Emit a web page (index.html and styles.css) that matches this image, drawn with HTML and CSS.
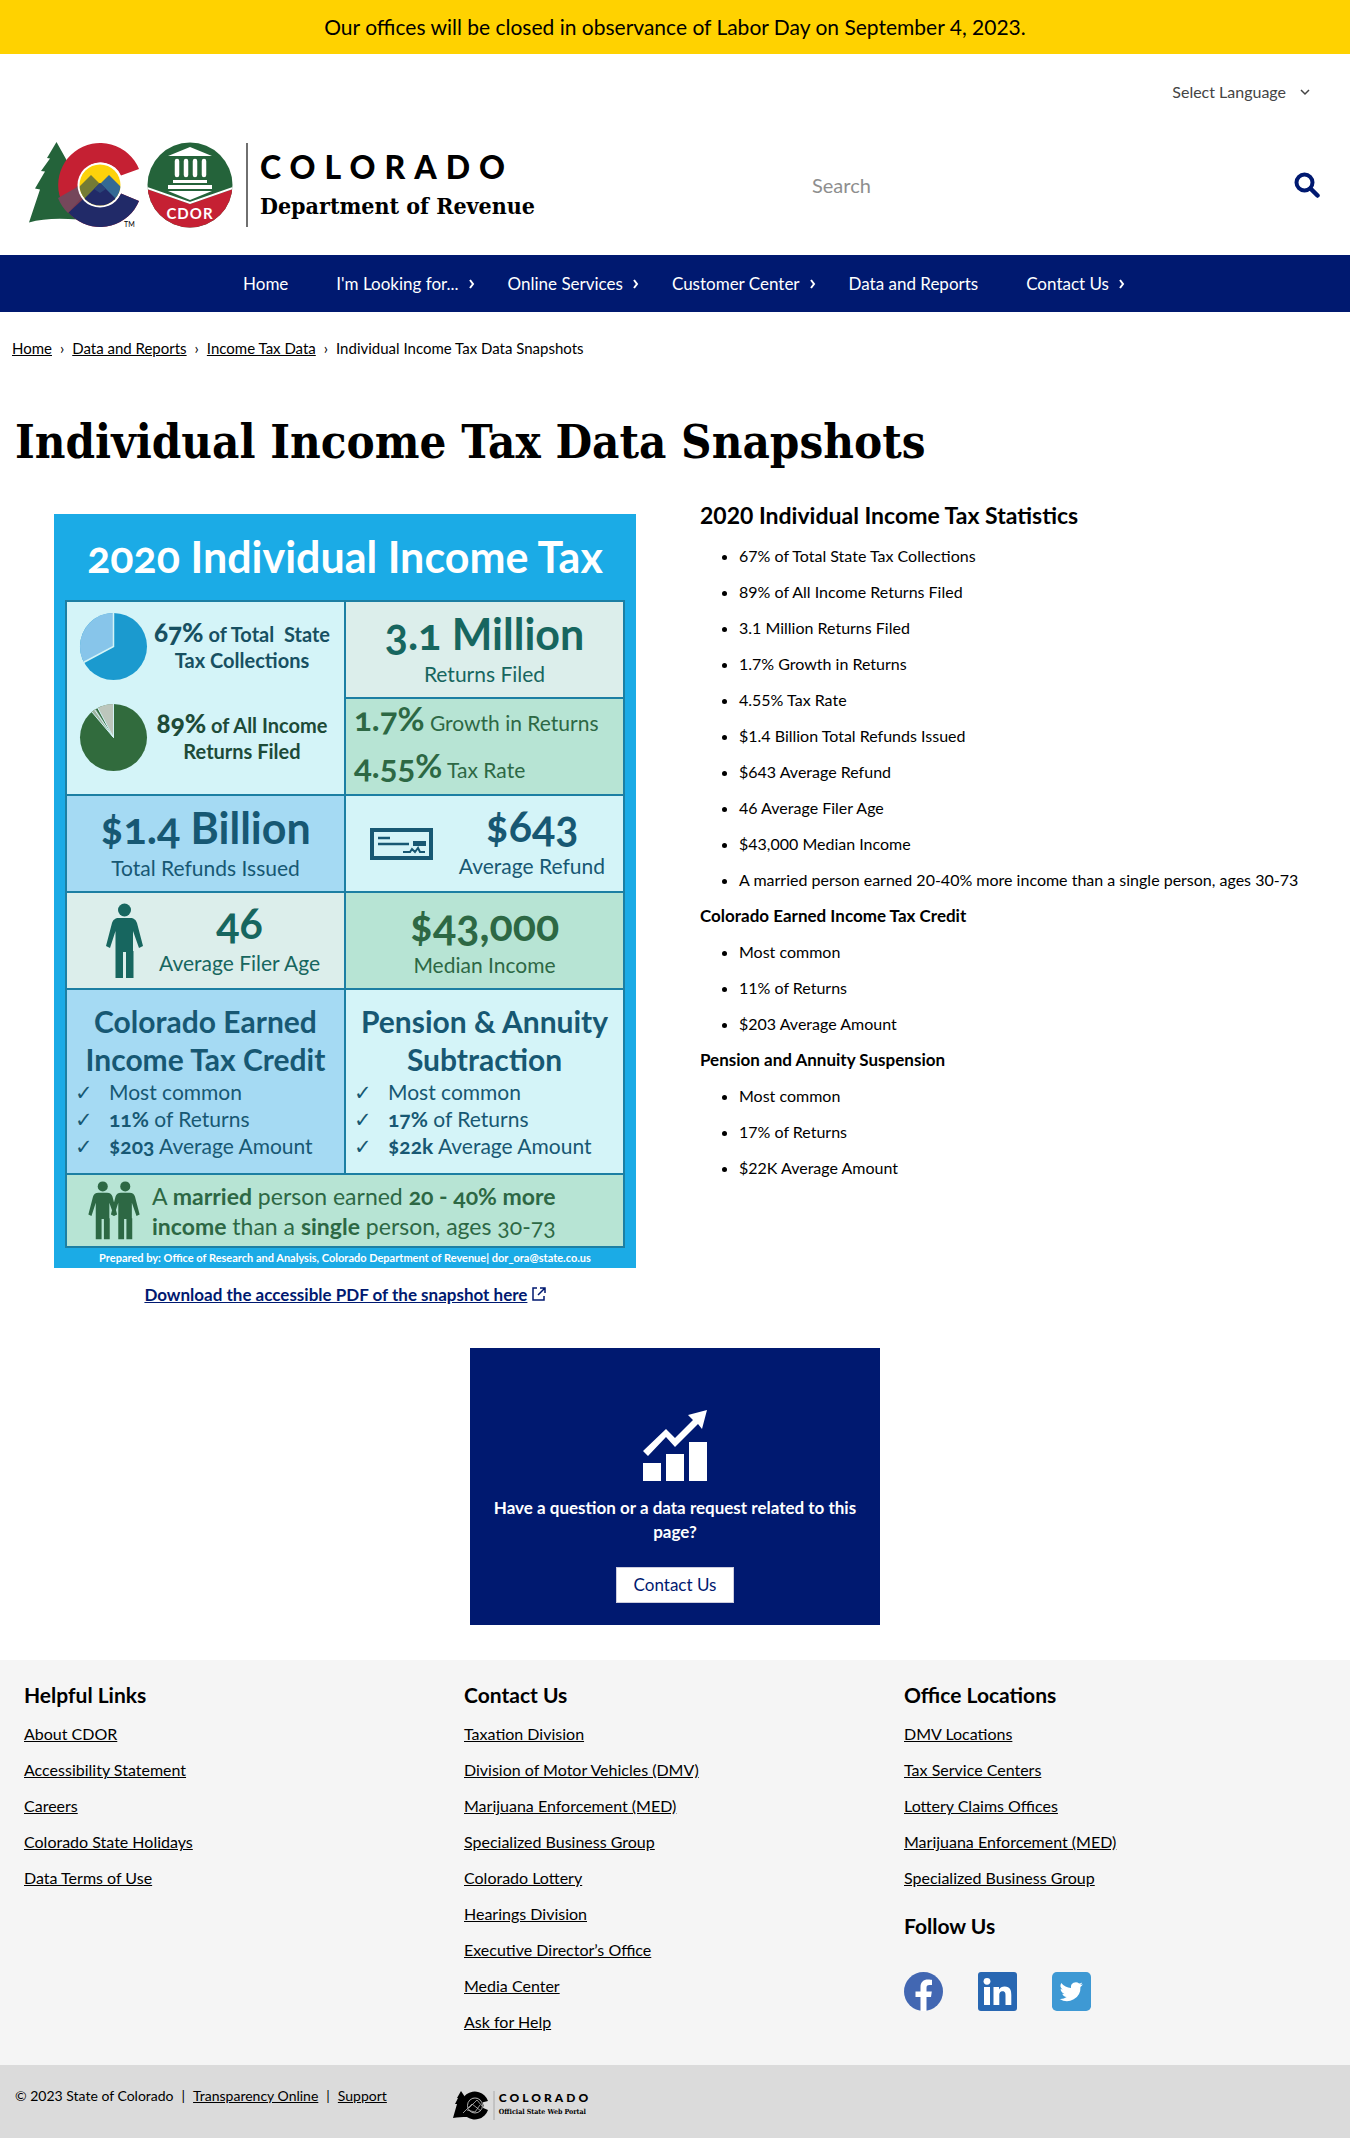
FILE: index.html
```html
<!DOCTYPE html>
<html lang="en">
<head>
<meta charset="utf-8">
<meta name="viewport" content="width=device-width, initial-scale=1">
<title>Individual Income Tax Data Snapshots | Department of Revenue</title>
<link rel="stylesheet" href="styles.css">
</head>
<body>
<div class="alert">Our offices will be closed in observance of Labor Day on September 4, 2023.</div>

<header class="header">
  <div class="language">
    <button class="language-button" type="button">Select Language
      <svg width="10" height="8" viewBox="0 0 10 8" aria-hidden="true"><path d="M1 2l4 4 4-4" fill="none" stroke="currentColor" stroke-width="1.5"/></svg>
    </button>
  </div>
  <div class="masthead">
    <a class="brand" href="#">
      <svg class="brand-mark" width="220" height="88" viewBox="28 141 220 88" role="img" aria-label="Colorado CDOR">
        <defs>
          <clipPath id="sun"><circle cx="100" cy="185" r="20.5"/></clipPath>
          <clipPath id="cshape"><path d="M139 169A42 42 0 1 0 139 201L121 193.500A22 22 0 1 1 121 175.500Z"/></clipPath>
          <clipPath id="seal"><circle cx="190" cy="185" r="42.500"/></clipPath>
        </defs>
        <path fill="#24633a" d="M56.500 142L47 158l3 .5-9 12.500 4 .5-10 17 5 1-11 33c13-4 30-4.500 49-3L88 160 71 168z"/>
        <g clip-path="url(#cshape)">
          <rect x="57" y="142" width="84" height="86" fill="#c52033"/>
          <path fill="#212a68" d="M68 212l32-32 42 14v36H57z"/>
          <path fill="#7a3b50" d="M57 206l26-25 10 9-25 23z"/>
        </g>
        <path d="M58 198a42 42 0 0 0 10 15L83 196 79 186z" fill="#75475b"/>
        <circle cx="100" cy="185" r="22.500" fill="#fff"/>
        <g clip-path="url(#sun)">
          <rect x="78" y="162" width="44" height="46" fill="#fdd20a"/>
          <path fill="#747b35" d="M76 190l15-15 15 15-18 20H76z"/>
          <path fill="#346a94" d="M94 190l15-15 15 15v10h-30z"/>
          <path fill="#212a68" d="M84 199l16-16 16 16-2 12H86z"/>
          <path fill="#2a4478" d="M94 189l6-6 6 6-6 4z"/>
        </g>
        <text class="tm" x="124" y="227">TM</text>
        <g clip-path="url(#seal)">
          <rect x="147" y="142" width="86" height="86" fill="#24633a"/>
          <path fill="#c52033" d="M147 189l43 15 43-15v40h-86z"/>
          <path d="M147 188l43 15 43-15" fill="none" stroke="#fff" stroke-width="2"/>
        </g>
        <path fill="#fff" d="M190 147l22 9h-44zM173 180h34v3h-34zM168 185h44v4h-44zM168 191h44l-22 9z"/>
        <path d="M177 161v14M186 161v14M195 161v14M204 161v14" stroke="#fff" stroke-width="4.500" stroke-linecap="round"/>
        <text class="cdor" x="190" y="219">CDOR</text>
        <path d="M247 143v84" stroke="#222" stroke-width="1.300"/>
      </svg>
      <span class="brand-name"><span class="brand-state">COLORADO</span><span class="brand-dept">Department of Revenue</span></span>
    </a>
    <form class="search" role="search">
      <input class="search-input" type="search" placeholder="Search" aria-label="Search">
      <button class="search-button" type="button" aria-label="Search">
        <svg width="26" height="26" viewBox="0 0 26 26"><circle cx="10.500" cy="10.500" r="8" fill="none" stroke="#001970" stroke-width="4"/><path d="M16.500 16.500l7 7" stroke="#001970" stroke-width="4.500" stroke-linecap="round"/></svg>
      </button>
    </form>
  </div>
</header>

<nav class="nav" aria-label="Main">
  <a class="nav-link nav-plain" href="#">Home</a>
  <a class="nav-link" href="#">I'm Looking for...<svg class="chev" viewBox="0 0 6 10"><path d="M1 1l3 4-3 4"/></svg></a>
  <a class="nav-link" href="#">Online Services<svg class="chev" viewBox="0 0 6 10"><path d="M1 1l3 4-3 4"/></svg></a>
  <a class="nav-link" href="#">Customer Center<svg class="chev" viewBox="0 0 6 10"><path d="M1 1l3 4-3 4"/></svg></a>
  <a class="nav-link nav-plain" href="#">Data and Reports</a>
  <a class="nav-link" href="#">Contact Us<svg class="chev" viewBox="0 0 6 10"><path d="M1 1l3 4-3 4"/></svg></a>
</nav>

<main>
  <nav class="crumbs" aria-label="Breadcrumb">
    <a href="#">Home</a><span>›</span><a href="#">Data and Reports</a><span>›</span><a href="#">Income Tax Data</a><span>›</span>Individual Income Tax Data Snapshots
  </nav>
  <h1 class="title">Individual Income Tax Data Snapshots</h1>

  <div class="columns">
    <section class="col-figure">
      <div class="snap">
        <div class="snap-title">2020 Individual Income Tax</div>
        <div class="snap-grid">
          <div class="cell cell-shares pale">
            <div class="share">
              <svg width="69" height="69" viewBox="-35 -35 70 70"><circle r="34" fill="#1b9acf"/><path d="M0 0V-34A34 34 0 0 0 -30 16Z" fill="#87c5ea"/><path d="M0-34V0L-30 16" fill="none" stroke="#d4f4f7" stroke-width="1.500"/></svg>
              <p><b class="pct">67%</b> of Total&nbsp; State<br>Tax Collections</p>
            </div>
            <div class="share share-green">
              <svg width="69" height="69" viewBox="-35 -35 70 70"><circle r="34" fill="#316b3d"/><path d="M0 0V-34A34 34 0 0 0 -16 -30Z" fill="#bcc6bc"/><path d="M0 0L-18-29-22-26Z" fill="#9fb39f"/><path d="M0-34V0L-16-30M0 0L-22-26M0 0L-19-28" fill="none" stroke="#d4f4f7"/></svg>
              <p><b class="pct">89%</b> of All Income<br>Returns Filed</p>
            </div>
          </div>
          <div class="cell grey teal"><b class="big">3.1 Million</b><span class="label">Returns Filed</span></div>
          <div class="cell cell-rates green forest"><div><b class="rate">1.7%</b> Growth in Returns</div><div><b class="rate">4.55%</b> Tax Rate</div></div>
          <div class="cell blue navy"><b class="big">$1.4 Billion</b><span class="label">Total Refunds Issued</span></div>
          <div class="cell cell-icon pale navy">
            <svg width="63" height="32" viewBox="0 0 63 32"><rect x="2" y="2" width="59" height="28" fill="none" stroke="#175873" stroke-width="4"/><path d="M8 10h12M8 16h31" stroke="#175873" stroke-width="2.500"/><path d="M43 13h13v5H43z" fill="#175873"/><path d="M33 24h7l2-3 3 3 3-4 2 4h5" fill="none" stroke="#175873" stroke-width="2"/></svg>
            <div><b class="big">$643</b><span class="label">Average Refund</span></div>
          </div>
          <div class="cell cell-icon cell-age grey teal">
            <svg width="37" height="76" viewBox="0 0 37 76"><use href="#person"/></svg>
            <div><b class="big">46</b><span class="label">Average Filer Age</span></div>
          </div>
          <div class="cell green forest"><b class="big">$43,000</b><span class="label">Median Income</span></div>
          <div class="cell cell-credit blue navy">
            <b class="credit">Colorado Earned<br>Income Tax Credit</b>
            <ul class="ticks"><li>Most common</li><li><b>11%</b> of Returns</li><li><b>$203</b> Average Amount</li></ul>
          </div>
          <div class="cell cell-credit pale navy">
            <b class="credit">Pension &amp; Annuity<br>Subtraction</b>
            <ul class="ticks"><li>Most common</li><li><b>17%</b> of Returns</li><li><b>$22k</b> Average Amount</li></ul>
          </div>
          <div class="cell cell-married green forest">
            <svg width="52" height="59" viewBox="0 0 66 76"><g id="person" fill="currentColor"><circle cx="18.500" cy="7" r="6.500"/><path d="M13 15h11c4 0 6 2 7 5l6 23-4 2-6-17v20h.5V75H20V49h-3v26h-7.500V28L4 45l-4-2L6 20c1-3 3-5 7-5z"/></g><use href="#person" x="29"/></svg>
            <p>A <b>married</b> person earned <b>20 - 40% more</b><br><b>income</b> than a <b>single</b> person, ages 30-73</p>
          </div>
        </div>
        <div class="snap-foot">Prepared by: Office of Research and Analysis, Colorado Department of Revenue| dor_ora@state.co.us</div>
      </div>
      <p class="download"><a href="#">Download the accessible PDF of the snapshot here</a>
        <svg width="14" height="14" viewBox="0 0 14 14" aria-hidden="true"><path d="M5 1H1v12h11V9M8 1h5v5M13 1L6 8" fill="none" stroke="#001970" stroke-width="1.500"/></svg></p>
    </section>

    <section class="stats">
      <h2>2020 Individual Income Tax Statistics</h2>
      <ul>
        <li>67% of Total State Tax Collections</li>
        <li>89% of All Income Returns Filed</li>
        <li>3.1 Million Returns Filed</li>
        <li>1.7% Growth in Returns</li>
        <li>4.55% Tax Rate</li>
        <li>$1.4 Billion Total Refunds Issued</li>
        <li>$643 Average Refund</li>
        <li>46 Average Filer Age</li>
        <li>$43,000 Median Income</li>
        <li>A married person earned 20-40% more income than a single person, ages 30-73</li>
      </ul>
      <h3>Colorado Earned Income Tax Credit</h3>
      <ul><li>Most common</li><li>11% of Returns</li><li>$203 Average Amount</li></ul>
      <h3>Pension and Annuity Suspension</h3>
      <ul><li>Most common</li><li>17% of Returns</li><li>$22K Average Amount</li></ul>
    </section>
  </div>

  <section class="ask">
    <svg width="64" height="71" viewBox="0 0 64 71" aria-hidden="true"><path fill="#fff" d="M0 53h18v18H0zM23 44h18v27H23zM46 32h18v39H46zM64 0l-5 19-4-5-23 23-9-10L5 46l-5-5 23-22 9 9 18-18-5-5z"/></svg>
    <p>Have a question or a data request related to this page?</p>
    <button class="ask-button" type="button">Contact Us</button>
  </section>
</main>

<footer>
  <div class="links">
    <section>
      <h2>Helpful Links</h2>
      <ul>
        <li><a href="#">About CDOR</a></li>
        <li><a href="#">Accessibility Statement</a></li>
        <li><a href="#">Careers</a></li>
        <li><a href="#">Colorado State Holidays</a></li>
        <li><a href="#">Data Terms of Use</a></li>
      </ul>
    </section>
    <section>
      <h2>Contact Us</h2>
      <ul>
        <li><a href="#">Taxation Division</a></li>
        <li><a href="#">Division of Motor Vehicles (DMV)</a></li>
        <li><a href="#">Marijuana Enforcement (MED)</a></li>
        <li><a href="#">Specialized Business Group</a></li>
        <li><a href="#">Colorado Lottery</a></li>
        <li><a href="#">Hearings Division</a></li>
        <li><a href="#">Executive Director’s Office</a></li>
        <li><a href="#">Media Center</a></li>
        <li><a href="#">Ask for Help</a></li>
      </ul>
    </section>
    <section>
      <h2>Office Locations</h2>
      <ul>
        <li><a href="#">DMV Locations</a></li>
        <li><a href="#">Tax Service Centers</a></li>
        <li><a href="#">Lottery Claims Offices</a></li>
        <li><a href="#">Marijuana Enforcement (MED)</a></li>
        <li><a href="#">Specialized Business Group</a></li>
      </ul>
      <h2 class="follow">Follow Us</h2>
      <div class="social">
        <a href="#" aria-label="Facebook"><svg width="39" height="39" viewBox="0 0 39 39"><circle cx="19.500" cy="19.500" r="19.500" fill="#4267b2"/><path fill="#fff" d="M16.500 39V25h-5v-5.500h5V15c0-5 3-7.500 7.500-7.500 2 0 3.500.3 4 .4V13h-2.500c-2.500 0-3 1.200-3 3v3.500h5.300l-.8 5.500h-4.500v14z"/></svg></a>
        <a href="#" aria-label="LinkedIn"><svg width="39" height="39" viewBox="0 0 39 39"><rect width="39" height="39" rx="3" fill="#2867b2"/><circle cx="9" cy="9.300" r="3.400" fill="#fff"/><path fill="#fff" d="M6 15h6v18H6zM15.500 15h5.500v2.500c1-1.800 3-3 5.700-3 5.500 0 6.600 3.600 6.600 8.500v10h-5.800v-9c0-2.200 0-4.700-2.900-4.700s-3.300 2.200-3.300 4.500V33h-5.800z"/></svg></a>
        <a href="#" aria-label="Twitter"><svg width="39" height="39" viewBox="0 0 24 24"><rect width="24" height="24" rx="3" fill="#3e99d4"/><path fill="#fff" d="M19 7.500a6 6 0 0 1-1.700.5 2.900 2.900 0 0 0 1.300-1.600 6 6 0 0 1-1.900.7 3 3 0 0 0-5 2.700 8.400 8.400 0 0 1-6-3.100 3 3 0 0 0 .9 4 3 3 0 0 1-1.300-.4c0 1.400.9 2.700 2.300 3a3 3 0 0 1-1.300.1 3 3 0 0 0 2.700 2A6 6 0 0 1 4.700 16.600 8.300 8.300 0 0 0 17.500 9.200 6 6 0 0 0 19 7.500z"/></svg></a>
      </div>
    </section>
  </div>
  <div class="legal">
    <p>© 2023 State of Colorado<i>|</i><a href="#">Transparency Online</a><i>|</i><a href="#">Support</a></p>
    <a class="portal" href="#">
      <svg width="42" height="31" viewBox="0 0 42 31" aria-hidden="true"><path d="M8 1L4 8h1L2 14h2L0 28c5-1 9-1 14-1L12 7z"/><path d="M35 11A14 14 0 1 0 35 20L29 17.500A7.500 7.500 0 1 1 29 12.500z"/><circle cx="22" cy="15.500" r="8.500"/><circle cx="22" cy="15.500" r="7.500" fill="none" stroke="#ddd" stroke-width=".8"/><path d="M10 23l9-9 9 7M16 18l8-8 5 6M14 20l8 2 5-7" fill="none" stroke="#bbb" stroke-width=".8"/><path d="M41 1v29" stroke="#aaa"/></svg>
      <span class="portal-name"><span class="portal-state">COLORADO</span><span class="portal-sub">Official State Web Portal</span></span>
    </a>
  </div>
</footer>
</body>
</html>
```
FILE: styles.css
```css
* { box-sizing: border-box; }
body { margin: 0; background: #fff; color: #000; font: 16px/24px Lato, "Open Sans", sans-serif; }
h1, h2, h3, p, ul { margin: 0; padding: 0; }
a { color: inherit; }
button { font: inherit; cursor: pointer; }

.alert { background: #ffd200; text-align: center; font-size: 21px; line-height: 54px; }

.header { padding: 23px 30px 26px; }
.language { display: flex; justify-content: flex-end; padding-right: 10px; }
.language-button { display: flex; align-items: center; gap: 14px; padding: 0; border: 0; background: none; color: #444; line-height: 30px; }
.masthead { display: flex; justify-content: space-between; align-items: center; padding-top: 34px; }
.brand { display: flex; gap: 12px; text-decoration: none; margin-left: -2px; }
.brand-mark { flex: none; }
.tm { font: 7px Lato, sans-serif; }
.cdor { font: bold 15px Lato, sans-serif; fill: #fff; text-anchor: middle; letter-spacing: 1px; }
.brand-name { display: flex; flex-direction: column; padding-top: 4px; }
.brand-state { font: 900 32px/44px Lato, sans-serif; letter-spacing: 9px; }
.brand-dept { font: bold 23px/34px "DejaVu Serif Condensed", "DejaVu Serif", serif; white-space: nowrap; }
.search { display: flex; align-items: center; width: 508px; }
.search-input { flex: 1; min-width: 0; border: 0; padding: 0; background: none; font: 20px/30px Lato, sans-serif; }
.search-input::placeholder { color: #8e8e8e; opacity: 1; }
.search-button { border: 0; padding: 0; background: none; display: flex; }

.nav { display: flex; justify-content: center; gap: 33px; background: #001970; color: #fff; padding-left: 18px; }
.nav-link { display: flex; align-items: center; gap: 10px; text-decoration: none; font-size: 17px; line-height: 57px; white-space: nowrap; }
.nav-plain { padding-right: 15px; }
.chev { width: 6px; height: 10px; fill: none; stroke: #fff; stroke-width: 2; }

.crumbs { padding: 24px 12px; font-size: 15px; }
.crumbs span { padding: 0 8px; }
.title { padding: 6px 15px 0; font: bold 47px/104px "DejaVu Serif Condensed", "DejaVu Serif", serif; }

.columns { display: grid; grid-template-columns: 1fr 1fr; padding: 0 15px; }
.col-figure { display: flex; flex-direction: column; align-items: center; padding-top: 20px; }
.stats { padding-left: 25px; }
.stats h2 { font-size: 23px; line-height: 42px; margin-bottom: 2px; }
.stats h3 { font-size: 17px; line-height: 36px; }
.stats ul { padding-left: 39px; }
.stats li { line-height: 36px; }

.snap { width: 582px; max-width: 100%; padding: 0 11px; background: #1babe6; font-variant-numeric: oldstyle-nums; }
.snap-title { color: #fff; text-align: center; font-size: 43px; line-height: 86px; font-weight: bold; white-space: nowrap; }
.snap-grid { display: grid; grid-template-columns: 1fr 1fr; grid-template-rows: 95px 95px 95px 95px 183px 71px; gap: 2px; padding: 2px; background: #1c7fa3; }
.cell { display: flex; flex-direction: column; align-items: center; padding-top: 10px; }
.pale { background: #d4f4f8; }
.grey { background: #dceeeb; }
.green { background: #b7e4d4; }
.blue { background: #a5daf3; }
.teal { color: #17665f; }
.navy { color: #175873; }
.forest { color: #2d6844; }
.big { display: block; font-size: 43px; line-height: 44px; text-align: center; }
.label { display: block; font-size: 21px; line-height: 36px; text-align: center; }
.cell-shares { grid-row: span 2; align-items: stretch; gap: 22px; padding-left: 12px; }
.share { display: flex; align-items: center; gap: 4px; padding-right: 12px; color: #175062; font-size: 20px; line-height: 26px; font-weight: bold; text-align: center; }
.share svg { flex: none; }
.share p { flex: 1; white-space: nowrap; }
.share-green { color: #1d4b38; }
.pct { font-size: 26px; line-height: 20px; }
.cell-rates { align-items: flex-start; padding: 0 0 0 8px; font-size: 21px; line-height: 47px; }
.rate { font-size: 33px; line-height: 33px; }
.cell-icon { flex-direction: row; align-items: center; justify-content: flex-end; gap: 26px; padding: 0 18px 0 0; }
.cell-age { gap: 16px; padding-right: 24px; }
.cell-credit { padding-top: 12px; }
.credit { font-size: 30px; line-height: 38px; text-align: center; }
.ticks { align-self: stretch; list-style: none; padding-left: 8px; font-size: 21px; line-height: 27px; }
.ticks li::before { content: "✓"; display: inline-block; width: 34px; font-family: "DejaVu Sans", sans-serif; line-height: 20px; }
.cell-married { grid-column: span 2; flex-direction: row; gap: 12px; padding: 0 0 0 21px; font-size: 23px; line-height: 30px; }
.snap-foot { color: #fff; font-size: 11px; line-height: 20px; font-weight: bold; text-align: center; white-space: nowrap; }
.download { padding: 15px 0 41px; font-size: 17px; font-weight: bold; color: #001970; }

.ask { width: 410px; max-width: 100%; margin: 0 auto 35px; padding: 62px 20px 22px; display: flex; flex-direction: column; align-items: center; background: #001970; color: #fff; text-align: center; }
.ask p { margin: 15px 0 23px; font-size: 17px; font-weight: bold; }
.ask-button { width: 118px; height: 36px; border: 1px solid #ccd; padding: 0; background: #fff; color: #001970; font-size: 17px; }

.links { display: grid; grid-template-columns: 1fr 1fr 1fr; padding: 17px 6px 25px 24px; background: #f5f5f5; }
.links h2 { font-size: 21px; line-height: 36px; margin-bottom: 3px; }
.links ul { list-style: none; }
.links li { line-height: 36px; }
.links .follow { margin: 12px 0 28px; }
.social { display: flex; gap: 35px; }
.social a { display: flex; }
.legal { display: flex; gap: 66px; align-items: flex-start; padding: 19px 15px 18px; background: #dbdbdb; font-size: 14px; }
.legal i { font-style: normal; padding: 0 8px; }
.portal { display: flex; gap: 4px; margin-top: 6px; text-decoration: none; }
.portal-name { display: flex; flex-direction: column; }
.portal-state { font: 900 12px/16px Lato, sans-serif; letter-spacing: 3px; }
.portal-sub { font: bold 7px/12px "DejaVu Serif Condensed", "DejaVu Serif", serif; }
```
